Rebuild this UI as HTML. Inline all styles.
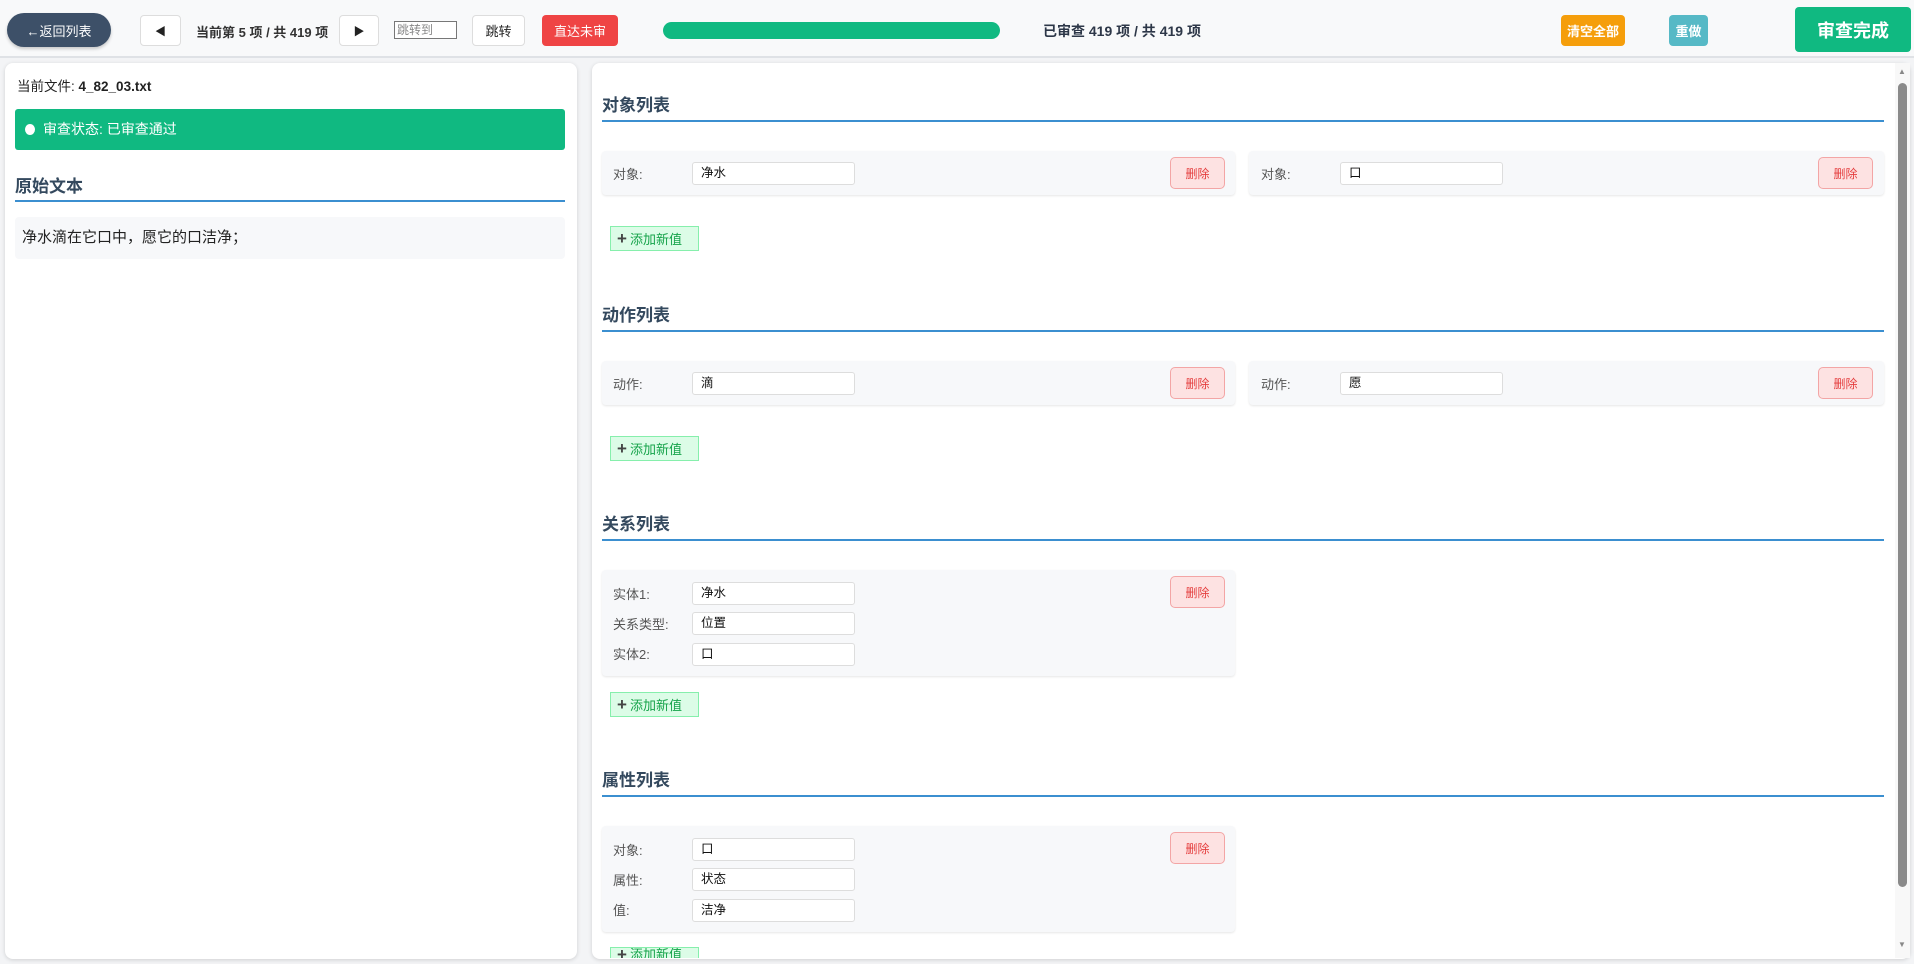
<!DOCTYPE html>
<html><head><meta charset="utf-8"><style>
*{box-sizing:border-box;margin:0;padding:0}
body{width:1914px;height:964px;overflow:hidden;background:#f3f4f6;font-family:"Liberation Sans","Noto Sans CJK SC",sans-serif;position:relative;color:#222}
.a{position:absolute}
.top{left:0;top:0;width:1914px;height:58px;background:#f8f9fa;border-bottom:2px solid #dfe2e6}
.btn{position:absolute;display:flex;align-items:center;justify-content:center;font-size:13px;border-radius:4px}
.wb{background:#fff;border:1px solid #ddd;color:#222}
.panel{background:#fff;border-radius:8px;box-shadow:0 1px 4px rgba(0,0,0,.15)}
.h{position:absolute;left:602px;font-size:17px;font-weight:bold;color:#34495e}
.line{position:absolute;left:602px;width:1282px;height:1.5px;background:#3b8fd0}
.card{position:absolute;background:#f7f8fa;border-radius:4px;box-shadow:0 1px 2px rgba(0,0,0,.1)}
.lbl{position:absolute;font-size:13px;color:#555}
.inp{position:absolute;width:163px;height:23px;background:#fff;border:1px solid #ddd;border-radius:3px;font-size:12.5px;padding-left:8px;line-height:21px;color:#111}
.del{position:absolute;width:55px;height:32px;background:#fde2e2;border:1px solid #f3a5a5;border-radius:5px;color:#e53e3e;font-size:12px;display:flex;align-items:center;justify-content:center}
.add{position:absolute;left:610px;width:89px;height:25px;background:#dcfce7;border:1px solid #86efac;color:#16a34a;font-size:13px;display:flex;align-items:center;padding-left:6px;gap:3px;overflow:hidden}
.plus{font-size:17px;font-weight:bold;color:#444}
</style></head><body>
<div class="a top"></div>
<div class="btn" style="left:7px;top:13px;width:104px;height:34px;background:#3d5068;color:#fff;border-radius:17px;box-shadow:0 2px 3px rgba(0,0,0,.2)">←返回列表</div>
<div class="btn wb" style="left:140px;top:15px;width:41px;height:31px;font-size:11px">◀</div>
<div class="a" style="left:196px;top:22px;font-size:13px;color:#333;font-weight:bold">当前第 5 项 / 共 419 项</div>
<div class="btn wb" style="left:339px;top:15px;width:40px;height:31px;font-size:11px">▶</div>
<div class="a" style="left:394px;top:21px;width:63px;height:18px;border:1px solid #777;background:#fff;font-size:12px;color:#888;padding-left:2px;line-height:16px">跳转到</div>
<div class="btn wb" style="left:472px;top:15px;width:53px;height:31px">跳转</div>
<div class="btn" style="left:542px;top:15px;width:76px;height:31px;background:#ef4444;color:#fff">直达未审</div>
<div class="a" style="left:663px;top:22px;width:337px;height:17px;background:#10b981;border-radius:9px"></div>
<div class="a" style="left:1043px;top:21px;font-size:14px;color:#2d3748;font-weight:bold">已审查 419 项 / 共 419 项</div>
<div class="btn" style="left:1561px;top:15px;width:64px;height:31px;background:#f59e0b;color:#fff;font-weight:bold">清空全部</div>
<div class="btn" style="left:1669px;top:15px;width:39px;height:31px;background:#56b9c6;color:#fff;font-weight:bold">重做</div>
<div class="btn" style="left:1795px;top:7px;width:116px;height:45px;background:#10b981;color:#fff;font-size:18px;font-weight:bold">审查完成</div>

<div class="a panel" style="left:5px;top:63px;width:572px;height:896px"></div>
<div class="a" style="left:17px;top:75px;font-size:13.5px">当前文件: <b>4_82_03.txt</b></div>
<div class="a" style="left:15px;top:109px;width:550px;height:41px;background:#10b981;border-radius:3px;color:#fff;font-size:14px;line-height:41px;padding-left:28px">审查状态: 已审查通过</div>
<div class="a" style="left:25px;top:124px;width:10px;height:11px;border-radius:50%;background:#fff"></div>
<div class="a" style="left:15px;top:172px;font-size:17px;font-weight:bold;color:#34495e">原始文本</div>
<div class="a" style="left:15px;top:200px;width:550px;height:1.5px;background:#3b8fd0"></div>
<div class="a" style="left:15px;top:217px;width:550px;height:42px;background:#f7f8fa;border-radius:4px;font-size:15px;line-height:42px;padding-left:7px">净水滴在它口中，愿它的口洁净；</div>

<div class="a panel" style="left:592px;top:63px;width:1318px;height:896px"></div>
<div class="a" style="left:1895px;top:63px;width:15px;height:895px;background:#f8f8f8"></div>
<div class="a" style="left:1898px;top:83px;width:9px;height:804px;background:#8a8a8a;border-radius:5px"></div>
<div class="a" style="left:1898px;top:67px;font-size:8px;color:#888">▲</div>
<div class="a" style="left:1898px;top:940px;font-size:8px;color:#888">▼</div>

<div class="h" style="top:91px">对象列表</div><div class="line" style="top:120px"></div>
<div class="card" style="left:602px;top:151px;width:633px;height:44px"></div>
<div class="lbl" style="left:613px;top:164px">对象:</div><div class="inp" style="left:692px;top:162px">净水</div><div class="del" style="left:1170px;top:157px">删除</div>
<div class="card" style="left:1249px;top:151px;width:635px;height:44px"></div>
<div class="lbl" style="left:1261px;top:164px">对象:</div><div class="inp" style="left:1340px;top:162px">口</div><div class="del" style="left:1818px;top:157px">删除</div>
<div class="add" style="top:226px"><span class="plus">+</span>添加新值</div>

<div class="h" style="top:301px">动作列表</div><div class="line" style="top:330px"></div>
<div class="card" style="left:602px;top:361px;width:633px;height:44px"></div>
<div class="lbl" style="left:613px;top:374px">动作:</div><div class="inp" style="left:692px;top:372px">滴</div><div class="del" style="left:1170px;top:367px">删除</div>
<div class="card" style="left:1249px;top:361px;width:635px;height:44px"></div>
<div class="lbl" style="left:1261px;top:374px">动作:</div><div class="inp" style="left:1340px;top:372px">愿</div><div class="del" style="left:1818px;top:367px">删除</div>
<div class="add" style="top:436px"><span class="plus">+</span>添加新值</div>

<div class="h" style="top:510px">关系列表</div><div class="line" style="top:539px"></div>
<div class="card" style="left:602px;top:570px;width:633px;height:106px"></div>
<div class="lbl" style="left:613px;top:584px">实体1:</div><div class="inp" style="left:692px;top:582px">净水</div>
<div class="lbl" style="left:613px;top:614px">关系类型:</div><div class="inp" style="left:692px;top:612px">位置</div>
<div class="lbl" style="left:613px;top:644px">实体2:</div><div class="inp" style="left:692px;top:643px">口</div>
<div class="del" style="left:1170px;top:576px">删除</div>
<div class="add" style="top:692px"><span class="plus">+</span>添加新值</div>

<div class="h" style="top:766px">属性列表</div><div class="line" style="top:795px"></div>
<div class="card" style="left:602px;top:826px;width:633px;height:106px"></div>
<div class="lbl" style="left:613px;top:840px">对象:</div><div class="inp" style="left:692px;top:838px">口</div>
<div class="lbl" style="left:613px;top:870px">属性:</div><div class="inp" style="left:692px;top:868px">状态</div>
<div class="lbl" style="left:613px;top:900px">值:</div><div class="inp" style="left:692px;top:899px">洁净</div>
<div class="del" style="left:1170px;top:832px">删除</div>
<div class="add" style="top:947px;height:11px;align-items:flex-start;border-bottom:none"><span class="plus" style="line-height:14px">+</span><span style="line-height:14px">添加新值</span></div>
</body></html>
